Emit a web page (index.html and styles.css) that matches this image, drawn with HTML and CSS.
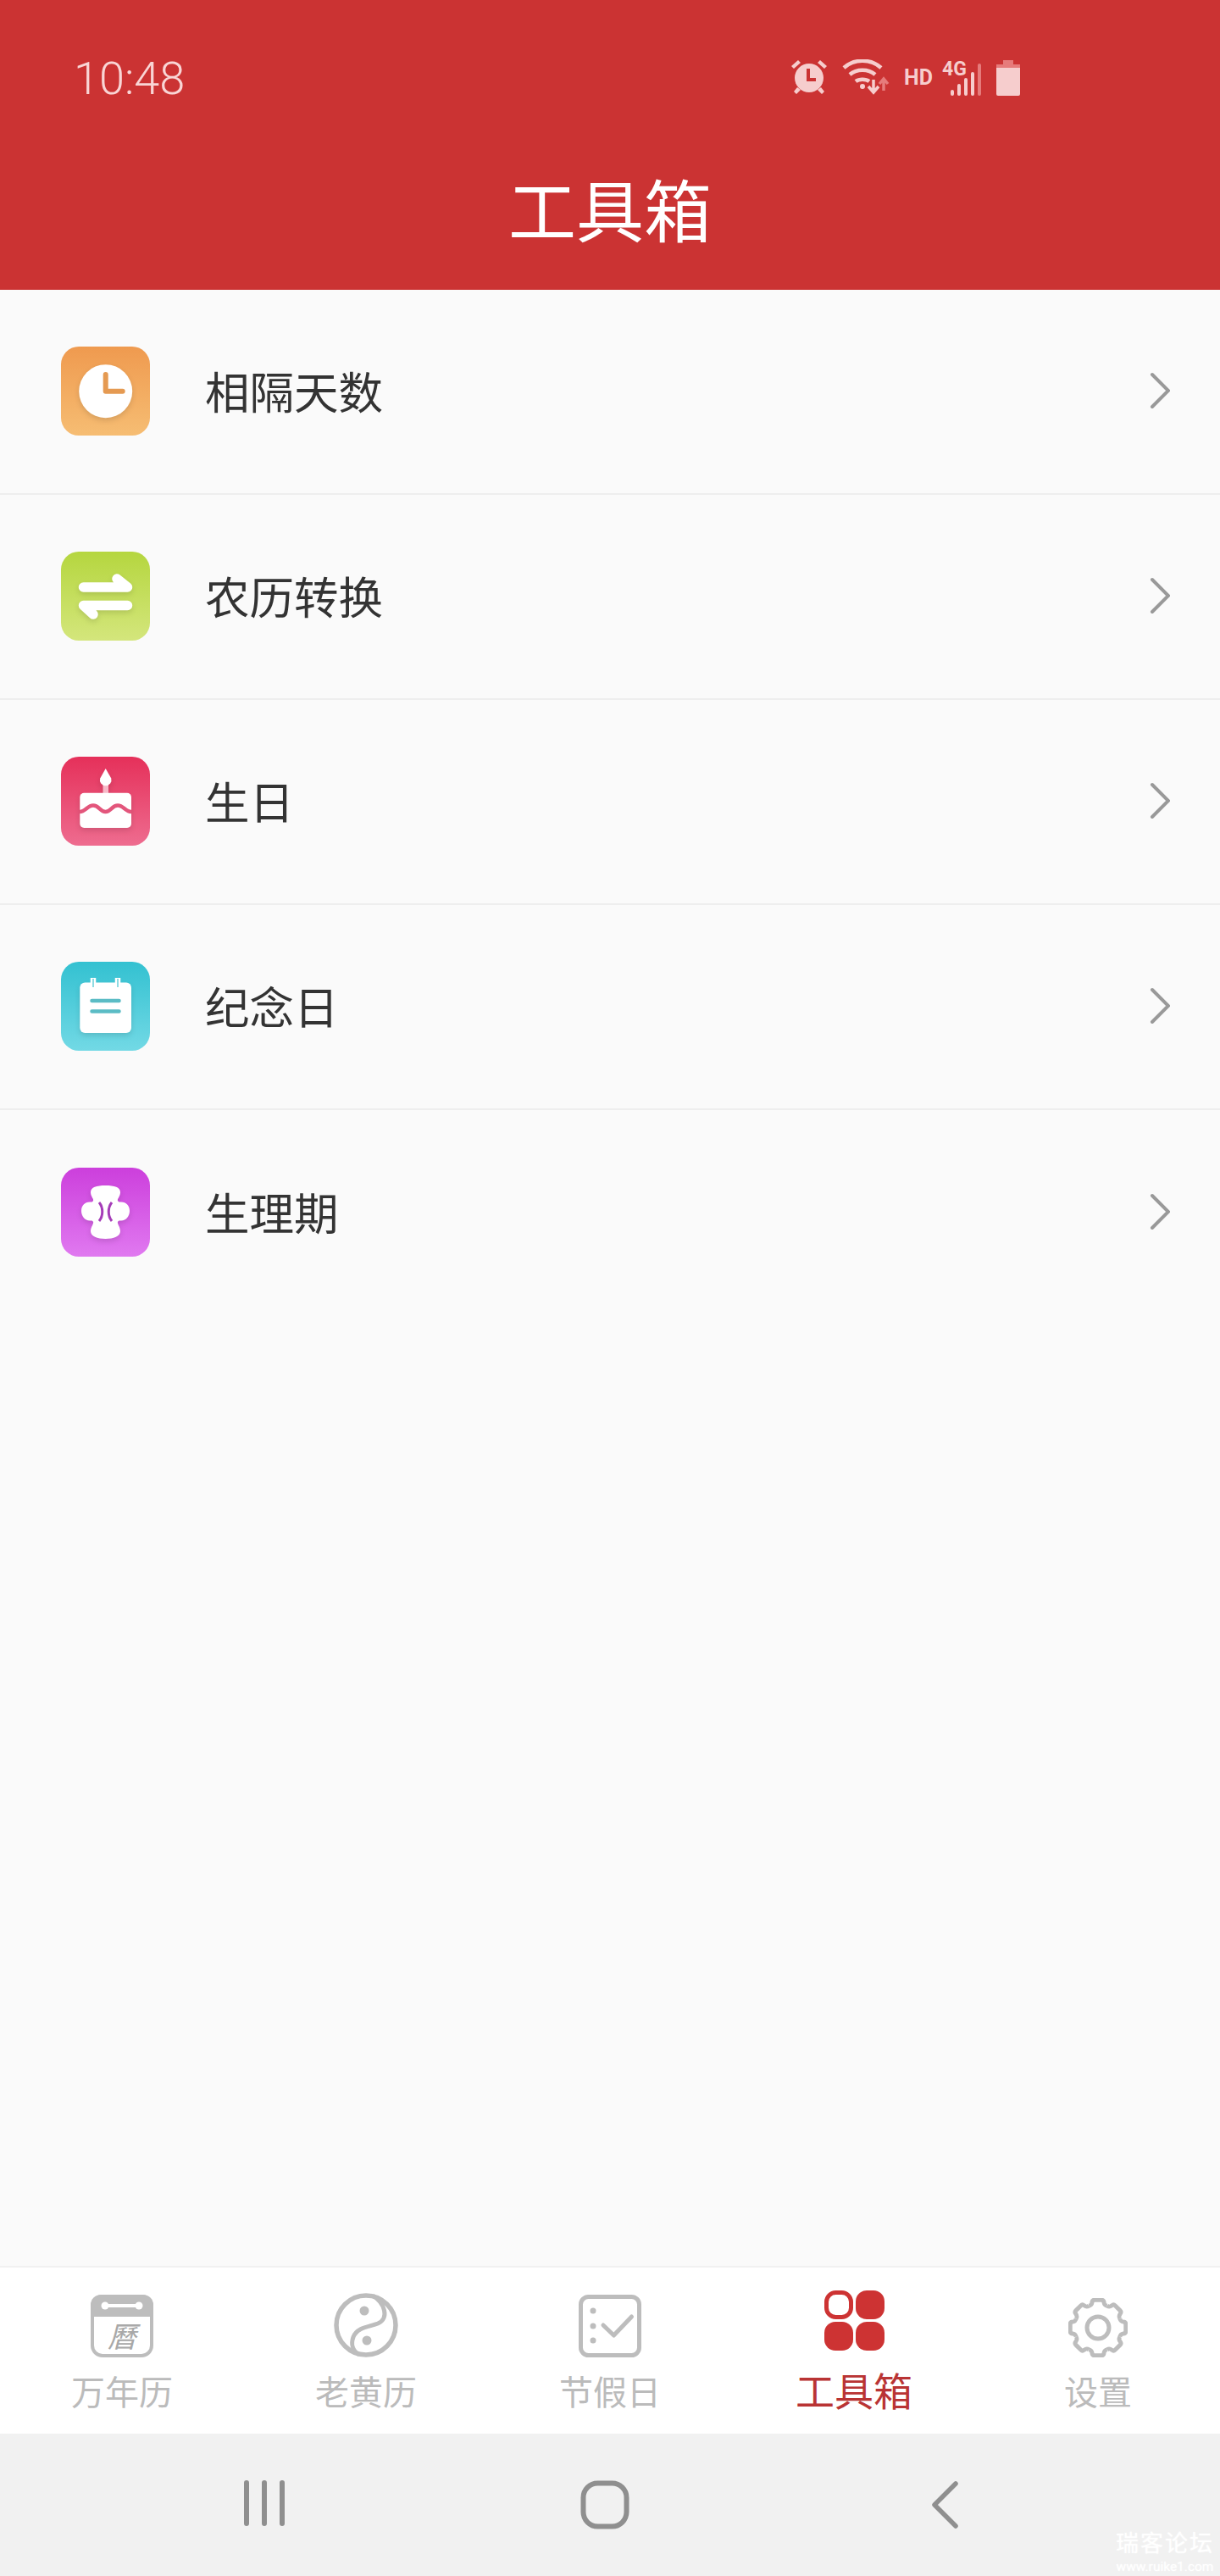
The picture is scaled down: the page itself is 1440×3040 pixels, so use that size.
FILE: index.html
```html
<!DOCTYPE html>
<html lang="zh-CN">
<head>
  <meta charset="UTF-8">
  <title>工具箱</title>
  <link rel="stylesheet" href="styles.css">
</head>
<body>
  <header class="top">
    <div class="status">
      <span class="time">10:48</span>
      <div class="status-icons">
        <svg class="st-alarm" width="44" height="42" viewBox="0 0 44 42">
          <path d="M1 8l8-7 3 3-8 7zM43 8l-8-7-3 3 8 7zM8 33l-4 5 3 3 5-5zM36 33l4 5-3 3-5-5z" fill="#f6cdcd"/>
          <circle cx="22" cy="22" r="17" fill="#f6cdcd"/>
          <path d="M21 11v13h9" fill="none" stroke="#cb3333" stroke-width="4"/>
        </svg>
        <svg class="st-wifi" width="56" height="42" viewBox="0 0 56 42">
          <g fill="none" stroke="#f6cdcd" stroke-width="4.5">
            <path d="M2 10c12-11 32-11 44 0"/>
            <path d="M9 18c8-7 22-7 30 0"/>
            <path d="M16 26c4-3 12-3 16 0"/>
          </g>
          <circle cx="24" cy="32" r="3" fill="#f6cdcd"/>
          <path d="M37 24v13M31 32l6 7 6-7" fill="none" stroke="#f6cdcd" stroke-width="3.5"/>
          <path d="M49 37V24M44 29l5-6 5 6" fill="none" stroke="#e67b7b" stroke-width="3.5"/>
        </svg>
        <span class="st-hd">HD</span>
        <div class="st-signal">
          <span class="st-4g">4G</span>
          <svg width="36" height="40" viewBox="0 0 36 40">
            <g fill="none" stroke-width="4" stroke-linecap="round">
              <path d="M2 37v-3M10 37V27M18 37V20M26 37V13" stroke="#f6cdcd"/>
              <path d="M34 37V3" stroke="#e67b7b"/>
            </g>
          </svg>
        </div>
        <svg class="st-batt" width="28" height="42" viewBox="0 0 28 42">
          <path d="M8 0h12v5h8v7H0V5h8z" fill="#e67b7b"/>
          <path d="M0 9h28v31a2 2 0 0 1-2 2H2a2 2 0 0 1-2-2z" fill="#f6cdcd"/>
        </svg>
      </div>
    </div>
    <h1>工具箱</h1>
  </header>

  <main class="list">
    <a class="row">
      <div class="tile tile-orange">
        <svg width="105" height="105" viewBox="0 0 105 105">
          <circle class="shape" cx="52.7" cy="52.7" r="31.5" fill="#fff"/>
          <path d="M52.7 33v19.7h20" fill="none" stroke="#e59a52" stroke-width="6" stroke-linecap="round" stroke-linejoin="round"/>
        </svg>
      </div>
      <span class="row-name">相隔天数</span>
      <svg class="chev" width="24" height="44" viewBox="0 0 24 44"><path d="M3 3l19 19L3 41" fill="none" stroke="#999" stroke-width="4" stroke-linecap="round"/></svg>
    </a>
    <a class="row">
      <div class="tile tile-green">
        <svg width="105" height="105" viewBox="0 0 105 105">
          <path class="shape" d="M26.500 42H78.500L66 32M78.500 63.500H26.500L38 74" fill="none" stroke="#fff" stroke-width="11.5" stroke-linecap="round" stroke-linejoin="round"/>
        </svg>
      </div>
      <span class="row-name">农历转换</span>
      <svg class="chev" width="24" height="44" viewBox="0 0 24 44"><path d="M3 3l19 19L3 41" fill="none" stroke="#999" stroke-width="4" stroke-linecap="round"/></svg>
    </a>
    <a class="row">
      <div class="tile tile-red">
        <svg width="105" height="105" viewBox="0 0 105 105">
          <g class="shape">
            <rect x="49.500" y="31" width="6.500" height="14" fill="#f7b9c8"/>
            <path d="M52.700 14l6.500 11.500a6.800 6.800 0 1 1-13 0z" fill="#fff"/>
            <rect x="22.300" y="42.700" width="60.700" height="41.300" rx="5" fill="#fff"/>
          </g>
          <path d="M22 65C29 65 31 57.500 38 57.500C45 57.500 46 65 52.500 65C59 65 60 57.500 67 57.500C74 57.500 76 65 83 65" fill="none" stroke="#e3567c" stroke-width="4.5"/>
        </svg>
      </div>
      <span class="row-name">生日</span>
      <svg class="chev" width="24" height="44" viewBox="0 0 24 44"><path d="M3 3l19 19L3 41" fill="none" stroke="#999" stroke-width="4" stroke-linecap="round"/></svg>
    </a>
    <a class="row">
      <div class="tile tile-teal">
        <svg width="105" height="105" viewBox="0 0 105 105">
          <rect class="shape" x="22.300" y="24.500" width="60.700" height="59.500" rx="6" fill="#fff"/>
          <path d="M38 19v11M67 19v11" stroke="#fff" stroke-width="6.5"/>
          <path d="M38 20v10M67 20v10" stroke="#8fdbe2" stroke-width="2"/>
          <path d="M36.500 46h32M36.500 58.500h32" stroke="#5bbcc5" stroke-width="4.5" stroke-linecap="round"/>
        </svg>
      </div>
      <span class="row-name">纪念日</span>
      <svg class="chev" width="24" height="44" viewBox="0 0 24 44"><path d="M3 3l19 19L3 41" fill="none" stroke="#999" stroke-width="4" stroke-linecap="round"/></svg>
    </a>
    <a class="row">
      <div class="tile tile-purple">
        <svg width="105" height="105" viewBox="0 0 105 105">
          <path class="shape" d="M52.500 21C63 21 70 23 70 29C70 34 66 37 67 39C68 41 69 40.500 71 40.500C77 40.500 81 45 81 51C81 57 77 62.500 71 62.500C69 62.500 68 62 67 64C66 66 70 70 70 75C70 81 62 84 52.500 84C43 84 35 81 35 75C35 70 39 66 38 64C37 62 36 62.500 34 62.500C28 62.500 24 57 24 51C24 45 28 40.500 34 40.500C36 40.500 37 41 38 39C39 37 35 34 35 29C35 23 42 21 52.500 21Z" fill="#fff"/>
          <path d="M45 41C50 47 50 57 45 63M60 41C55 47 55 57 60 63" fill="none" stroke="#a53cb8" stroke-width="3"/>
        </svg>
      </div>
      <span class="row-name">生理期</span>
      <svg class="chev" width="24" height="44" viewBox="0 0 24 44"><path d="M3 3l19 19L3 41" fill="none" stroke="#999" stroke-width="4" stroke-linecap="round"/></svg>
    </a>
  </main>

  <nav class="tabs">
    <div class="tab">
      <div class="tab-icon">
        <svg width="74" height="74" viewBox="0 0 74 74">
          <rect x="2" y="2" width="70" height="70" rx="12" fill="#fff" stroke="#bdbdbd" stroke-width="4"/>
          <path d="M12 0h50a12 12 0 0 1 12 12v14H0V12A12 12 0 0 1 12 0z" fill="#bdbdbd"/>
          <path d="M17 13h40" stroke="#fff" stroke-width="4"/>
          <circle cx="17" cy="13" r="4.500" fill="#fff"/>
          <circle cx="57" cy="13" r="4.500" fill="#fff"/>
          <text class="cal-char" x="37" y="62" text-anchor="middle">曆</text>
        </svg>
      </div>
      <span class="tab-label">万年历</span>
    </div>
    <div class="tab">
      <div class="tab-icon">
        <svg width="76" height="76" viewBox="0 0 76 76">
          <circle cx="38" cy="38" r="35" fill="none" stroke="#bdbdbd" stroke-width="5.500"/>
          <path d="M46 3C60 12 66 30 52 36C42 40 28 40 23 52C20 60 22 68 30 73" fill="none" stroke="#bdbdbd" stroke-width="5"/>
          <circle cx="36" cy="21" r="5.500" fill="#bdbdbd"/>
          <circle cx="39" cy="56" r="5.500" fill="#bdbdbd"/>
        </svg>
      </div>
      <span class="tab-label">老黄历</span>
    </div>
    <div class="tab">
      <div class="tab-icon">
        <svg width="74" height="74" viewBox="0 0 74 74">
          <rect x="2.500" y="2.500" width="69" height="69" rx="9" fill="none" stroke="#bdbdbd" stroke-width="5"/>
          <circle cx="17" cy="19" r="3.500" fill="#bdbdbd"/>
          <circle cx="17" cy="37" r="3.500" fill="#bdbdbd"/>
          <circle cx="17" cy="54" r="3.500" fill="#bdbdbd"/>
          <path d="M29 36l12.500 12L62.500 26" fill="none" stroke="#bdbdbd" stroke-width="5" stroke-linecap="round" stroke-linejoin="round"/>
        </svg>
      </div>
      <span class="tab-label">节假日</span>
    </div>
    <div class="tab tab-active">
      <div class="tab-icon">
        <svg width="71" height="71" viewBox="0 0 71 71">
          <rect x="2.500" y="2.500" width="29" height="29" rx="11" fill="#fff" stroke="#cd3333" stroke-width="5"/>
          <rect x="37" y="0" width="34" height="34" rx="13" fill="#cd3333"/>
          <rect x="0" y="37" width="34" height="34" rx="13" fill="#cd3333"/>
          <rect x="37" y="37" width="34" height="34" rx="13" fill="#cd3333"/>
        </svg>
      </div>
      <span class="tab-label">工具箱</span>
    </div>
    <div class="tab">
      <div class="tab-icon">
        <svg width="70" height="70" viewBox="-35 -35 70 70">
          <defs>
            <path id="gear-seg" d="M-10.700-25.900C-8-26.500-7.500-27-7-30C-6.800-32-6-32.800-4-32.800H4C6-32.800 6.800-32 7-30C7.500-27 8-26.500 10.700-25.900" fill="none" stroke="#bdbdbd" stroke-width="5"/>
          </defs>
          <use href="#gear-seg"/>
          <use href="#gear-seg" transform="rotate(45)"/>
          <use href="#gear-seg" transform="rotate(90)"/>
          <use href="#gear-seg" transform="rotate(135)"/>
          <use href="#gear-seg" transform="rotate(180)"/>
          <use href="#gear-seg" transform="rotate(225)"/>
          <use href="#gear-seg" transform="rotate(270)"/>
          <use href="#gear-seg" transform="rotate(315)"/>
          <circle r="13" fill="none" stroke="#bdbdbd" stroke-width="5"/>
        </svg>
      </div>
      <span class="tab-label">设置</span>
    </div>
  </nav>

  <footer class="sysnav">
    <svg class="nav-menu" width="48" height="54" viewBox="0 0 48 54">
      <path d="M3 3v48M24 3v48M45 3v48" stroke="#8f8f8f" stroke-width="6" stroke-linecap="round"/>
    </svg>
    <svg class="nav-home" width="58" height="58" viewBox="0 0 58 58">
      <rect x="3.500" y="3.500" width="51" height="51" rx="17" fill="none" stroke="#8f8f8f" stroke-width="6"/>
    </svg>
    <svg class="nav-back" width="32" height="56" viewBox="0 0 32 56">
      <path d="M29 3L4 28l25 25" fill="none" stroke="#8f8f8f" stroke-width="5.500" stroke-linecap="round" stroke-linejoin="round"/>
    </svg>
    <div class="mark">
      <span class="mark-name">瑞客论坛</span>
      <span class="mark-url">www.ruike1.com</span>
    </div>
  </footer>
</body>
</html>
```

FILE: styles.css
```css
* {
  box-sizing: border-box;
}
body {
  margin: 0;
  height: 3040px;
  display: flex;
  flex-direction: column;
  background-color: #fafafa;
  font-family: "Noto Sans CJK SC", "Noto Sans", sans-serif;
}

/* header */
.top {
  height: 342px;
  background-color: #cb3333;
  color: #fff;
  flex-shrink: 0;
}
.status {
  height: 68px;
  padding: 68px 236px 0 87px;
  display: flex;
  justify-content: space-between;
  align-items: flex-start;
  box-sizing: content-box;
}
.time {
  font-family: Roboto, sans-serif;
  font-weight: 300;
  font-size: 54px;
  line-height: 50px;
  color: #f9d5d5;
}
.status-icons {
  display: flex;
  align-items: flex-start;
}
.st-alarm {
  margin-top: 2px;
}
.st-wifi {
  margin: 2px 0 0 17px;
}
.st-hd {
  margin: 10px 0 0 17px;
  font-family: Roboto, sans-serif;
  font-weight: 700;
  font-size: 25px;
  line-height: 28px;
  color: #f6cdcd;
}
.st-signal {
  position: relative;
  width: 46px;
  margin-left: 11px;
  padding: 6px 0 0 10px;
}
.st-signal svg {
  display: block;
}
.st-4g {
  position: absolute;
  left: 0;
  top: 2px;
  font-family: Roboto, sans-serif;
  font-weight: 700;
  font-size: 23px;
  line-height: 24px;
  color: #f6cdcd;
}
.st-batt {
  margin: 3px 0 0 18px;
}
h1 {
  margin: 0;
  padding-top: 58px;
  text-align: center;
  font-weight: 400;
  font-size: 80px;
  line-height: 100px;
}

/* list */
.list {
  flex: 1;
}
.row {
  height: 242px;
  padding: 0 59px 2px 72px;
  display: flex;
  align-items: center;
  border-bottom: 2px solid #eeeeee;
}
.row:last-child {
  border-bottom: none;
}
.tile {
  width: 105px;
  height: 105px;
  border-radius: 21px;
  flex-shrink: 0;
}
.tile svg {
  display: block;
}
.shape {
  filter: drop-shadow(0 3px 3px rgba(0,0,0,0.12));
}
.tile-orange {
  background: linear-gradient(#ef9a4f, #f6bd73);
}
.tile-green {
  background: linear-gradient(#b5d63f, #d4e67c);
}
.tile-red {
  background: linear-gradient(#e5305a, #ee6c8f);
}
.tile-teal {
  background: linear-gradient(#33c1d1, #72d9e5);
}
.tile-purple {
  background: linear-gradient(#cc3fdc, #e079f0);
}
.row-name {
  margin-left: 65px;
  padding-bottom: 3px;
  flex: 1;
  font-size: 52.5px;
  line-height: 70px;
  color: #333;
}

/* bottom tabs */
.tabs {
  height: 198px;
  flex-shrink: 0;
  display: grid;
  grid-template-columns: repeat(5, 1fr);
  background-color: #fff;
  border-top: 2px solid #f1f1f1;
}
.tab {
  display: flex;
  flex-direction: column;
  align-items: center;
  padding-top: 22px;
}
.tab-icon {
  height: 84px;
  display: flex;
  align-items: flex-end;
}
.tab-icon svg {
  display: block;
}
.tab-label {
  margin-top: 16px;
  font-size: 40px;
  line-height: 46px;
  color: #bbb;
}
.tab-active .tab-icon svg {
  margin-bottom: 8px;
}
.tab-active .tab-label {
  margin-top: 14px;
  font-size: 46px;
  color: #b93434;
}
.cal-char {
  font-family: "Noto Sans CJK TC", serif;
  font-size: 34px;
  font-style: italic;
  fill: #a8a8a8;
}

/* system nav */
.sysnav {
  height: 168px;
  flex-shrink: 0;
  position: relative;
  display: flex;
  align-items: flex-start;
  padding: 55px 0 0 288px;
  background-color: #f1f1f1;
}
.nav-home {
  margin-left: 349px;
}
.nav-back {
  margin-left: 356px;
  margin-top: 1px;
}
.mark {
  position: absolute;
  right: 6px;
  bottom: 2px;
  width: 118px;
  display: flex;
  flex-direction: column;
  align-items: center;
  color: #fff;
  text-shadow: 0 0 2px rgba(255,255,255,0.7);
}
.mark-name {
  font-size: 27px;
  line-height: 40px;
  letter-spacing: 2px;
}
.mark-url {
  font-family: Roboto, sans-serif;
  font-size: 15.5px;
  line-height: 18px;
}
```
